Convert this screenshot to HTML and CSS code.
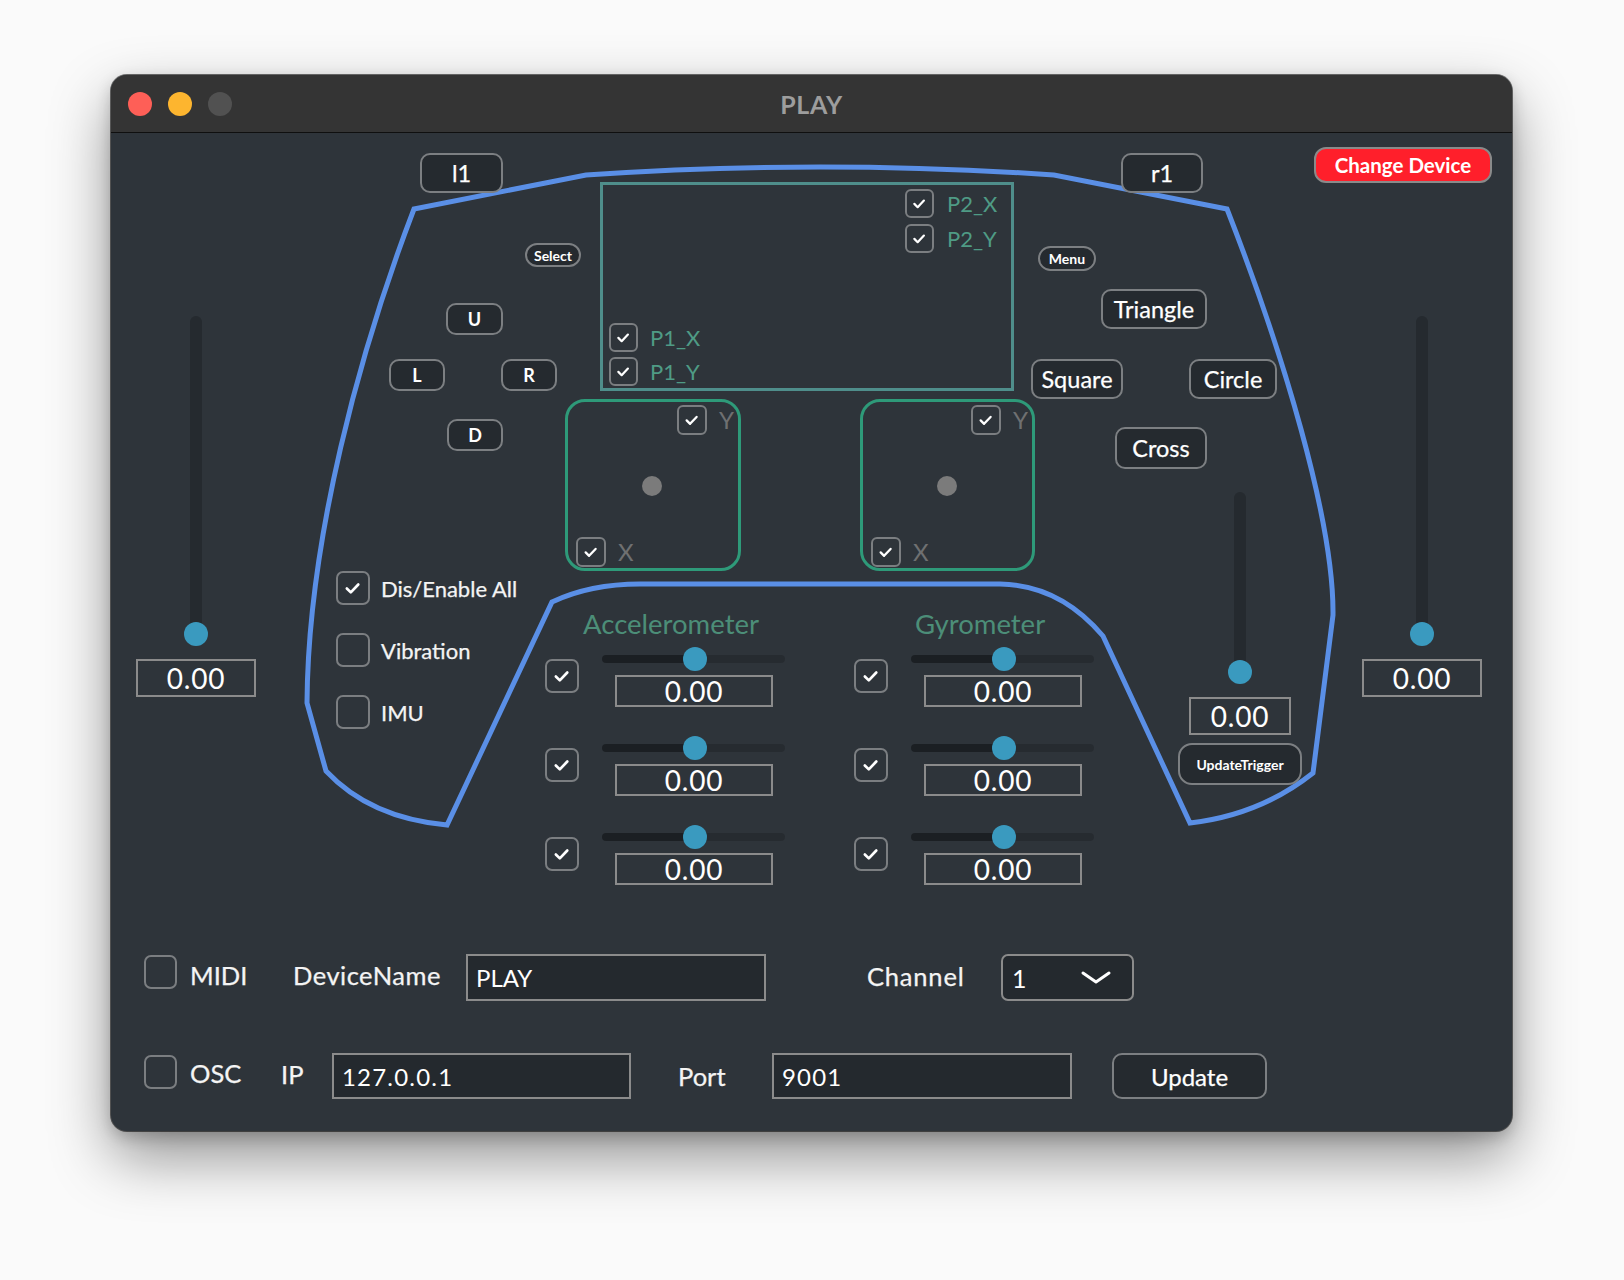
FILE: index.html
```html
<!DOCTYPE html>
<html>
<head>
<meta charset="utf-8">
<title>PLAY</title>
<link rel="stylesheet" href="styles.css">
</head>
<body>
<div class="window">
  <div class="titlebar">
    <div class="lights"><span class="light red"></span><span class="light yellow"></span><span class="light gray"></span></div>
    <div class="title">PLAY</div>
    <div class="tb-spacer"></div>
  </div>
  <div class="content">
    <div class="canvas">
      <svg class="outline" viewBox="111 133 1401 821" width="1401" height="821">
        <path d="M414 209 L586 175 Q820 159 1054 175 L1227 209 C1282 350 1334 520 1333 615 L1313 773 Q1260 815 1190 823 L1103 636 Q1060 585 1000 584 L640 584 Q590 584 552 602 L447 825 Q370 818 326 771 L307 703 C308 540 360 350 414 209 Z"/>
      </svg>

      <div class="btn b-l1">l1</div>
      <div class="btn b-r1">r1</div>
      <div class="btn b-change">Change Device</div>
      <div class="btn pill b-select">Select</div>
      <div class="btn pill b-menu">Menu</div>
      <div class="btn dpad b-u">U</div>
      <div class="btn dpad b-l">L</div>
      <div class="btn dpad b-r">R</div>
      <div class="btn dpad b-d">D</div>
      <div class="btn b-tri">Triangle</div>
      <div class="btn b-sq">Square</div>
      <div class="btn b-ci">Circle</div>
      <div class="btn b-cr">Cross</div>

      <div class="pad">
        <div class="pad-group pad-top">
          <div class="chk-row"><span class="cb cb-sm on"><svg viewBox="0 0 34 34"><path d="M10 17.5 L14.5 22 L23 13"/></svg></span><span class="lbl-teal">P2_X</span></div>
          <div class="chk-row"><span class="cb cb-sm on"><svg viewBox="0 0 34 34"><path d="M10 17.5 L14.5 22 L23 13"/></svg></span><span class="lbl-teal">P2_Y</span></div>
        </div>
        <div class="pad-group pad-bottom">
          <div class="chk-row p1"><span class="cb cb-sm on"><svg viewBox="0 0 34 34"><path d="M10 17.5 L14.5 22 L23 13"/></svg></span><span class="lbl-teal">P1_X</span></div>
          <div class="chk-row p1"><span class="cb cb-sm on"><svg viewBox="0 0 34 34"><path d="M10 17.5 L14.5 22 L23 13"/></svg></span><span class="lbl-teal">P1_Y</span></div>
        </div>
      </div>

      <div class="stick stick-left">
        <div class="stick-top"><span class="cb cb-st on"><svg viewBox="0 0 34 34"><path d="M10 17.5 L14.5 22 L23 13"/></svg></span><span class="lbl-axis">Y</span></div>
        <div class="dot"></div>
        <div class="stick-bottom"><span class="cb cb-st on"><svg viewBox="0 0 34 34"><path d="M10 17.5 L14.5 22 L23 13"/></svg></span><span class="lbl-axis">X</span></div>
      </div>
      <div class="stick stick-right">
        <div class="stick-top"><span class="cb cb-st on"><svg viewBox="0 0 34 34"><path d="M10 17.5 L14.5 22 L23 13"/></svg></span><span class="lbl-axis">Y</span></div>
        <div class="dot"></div>
        <div class="stick-bottom"><span class="cb cb-st on"><svg viewBox="0 0 34 34"><path d="M10 17.5 L14.5 22 L23 13"/></svg></span><span class="lbl-axis">X</span></div>
      </div>

      <div class="opts">
        <div class="opt-row"><span class="cb on"><svg viewBox="0 0 34 34"><path d="M10 17.5 L14.5 22 L23 13"/></svg></span><span class="opt-label">Dis/Enable All</span></div>
        <div class="opt-row"><span class="cb"></span><span class="opt-label">Vibration</span></div>
        <div class="opt-row"><span class="cb"></span><span class="opt-label">IMU</span></div>
      </div>

      <div class="sensor sensor-acc">
        <div class="sensor-head">Accelerometer</div>
        <div class="srows">
          <div class="srow"><span class="cb on"><svg viewBox="0 0 34 34"><path d="M10 17.5 L14.5 22 L23 13"/></svg></span><div class="sl-col"><div class="hslider"><div class="htrack"></div><div class="hknob"></div></div><div class="vbox">0.00</div></div></div>
          <div class="srow"><span class="cb on"><svg viewBox="0 0 34 34"><path d="M10 17.5 L14.5 22 L23 13"/></svg></span><div class="sl-col"><div class="hslider"><div class="htrack"></div><div class="hknob"></div></div><div class="vbox">0.00</div></div></div>
          <div class="srow"><span class="cb on"><svg viewBox="0 0 34 34"><path d="M10 17.5 L14.5 22 L23 13"/></svg></span><div class="sl-col"><div class="hslider"><div class="htrack"></div><div class="hknob"></div></div><div class="vbox">0.00</div></div></div>
        </div>
      </div>
      <div class="sensor sensor-gyro">
        <div class="sensor-head">Gyrometer</div>
        <div class="srows">
          <div class="srow"><span class="cb on"><svg viewBox="0 0 34 34"><path d="M10 17.5 L14.5 22 L23 13"/></svg></span><div class="sl-col"><div class="hslider"><div class="htrack"></div><div class="hknob"></div></div><div class="vbox">0.00</div></div></div>
          <div class="srow"><span class="cb on"><svg viewBox="0 0 34 34"><path d="M10 17.5 L14.5 22 L23 13"/></svg></span><div class="sl-col"><div class="hslider"><div class="htrack"></div><div class="hknob"></div></div><div class="vbox">0.00</div></div></div>
          <div class="srow"><span class="cb on"><svg viewBox="0 0 34 34"><path d="M10 17.5 L14.5 22 L23 13"/></svg></span><div class="sl-col"><div class="hslider"><div class="htrack"></div><div class="hknob"></div></div><div class="vbox">0.00</div></div></div>
        </div>
      </div>

      <div class="vslider vs-left"><div class="vtrack"></div><div class="vknob"></div><div class="vval">0.00</div></div>
      <div class="vslider vs-right"><div class="vtrack"></div><div class="vknob"></div><div class="vval">0.00</div></div>
      <div class="vslider vs-mid"><div class="vtrack"></div><div class="vknob"></div><div class="vval">0.00</div><div class="btn-trig">UpdateTrigger</div></div>
    </div>

    <div class="io">
      <div class="io-row row-midi">
        <span class="cb io-cb"></span>
        <span class="lab w-midi">MIDI</span>
        <span class="lab w-devname">DeviceName</span>
        <div class="field f-dev">PLAY</div>
        <span class="lab w-channel">Channel</span>
        <div class="dropdown"><span>1</span><svg class="chev" viewBox="0 0 30 13"><path d="M2 2 L15 11 L28 2"/></svg></div>
      </div>
      <div class="io-row row-osc">
        <span class="cb io-cb"></span>
        <span class="lab w-osc">OSC</span>
        <span class="lab w-ip">IP</span>
        <div class="field f-ip num">127.0.0.1</div>
        <span class="lab w-port">Port</span>
        <div class="field f-port num">9001</div>
        <div class="btn-update">Update</div>
      </div>
    </div>
  </div>
</div>
</body>
</html>
```

FILE: styles.css
```css
* { box-sizing: border-box; }
html, body { margin: 0; padding: 0; }
body {
  width: 1624px;
  height: 1280px;
  background: #fafafa;
  font-family: Lato, "Liberation Sans", sans-serif;
  color: #ffffff;
  overflow: hidden;
}

.window {
  margin: 75px 0 0 111px;
  width: 1401px;
  height: 1056px;
  border-radius: 16px;
  background: #2e343a;
  overflow: hidden;
  box-shadow: 0 0 0 1px rgba(0,0,0,0.55), 0 26px 60px rgba(0,0,0,0.42), 0 6px 16px rgba(0,0,0,0.2);
}

/* title bar */
.titlebar {
  height: 58px;
  background: #343434;
  border-bottom: 1px solid #0f0f0f;
  display: grid;
  grid-template-columns: 1fr auto 1fr;
  align-items: center;
}
.lights { display: flex; gap: 16px; padding-left: 17px; }
.light { width: 24px; height: 24px; border-radius: 50%; display: block; }
.light.red { background: #fe5f57; }
.light.yellow { background: #fdb52f; }
.light.gray { background: #515151; }
.title { color: #9d9d9d; font-weight: 700; font-size: 25px; letter-spacing: 0.6px; }

.content { height: 998px; }
.canvas { position: relative; height: 821px; }

.outline { position: absolute; left: 0; top: 0; }
.outline path { fill: none; stroke: #5a8fe6; stroke-width: 5; stroke-linejoin: miter; }

/* buttons */
.btn {
  position: absolute;
  display: flex;
  align-items: center;
  justify-content: center;
  background: #252a2f;
  border: 2px solid #7c7f82;
  border-radius: 10px;
  font-size: 23.5px;
  color: #ffffff;
  -webkit-text-stroke: 0.25px #ffffff;
}
.btn.pill { border-radius: 13px; font-size: 14px; font-weight: 700; -webkit-text-stroke: 0; }
.btn.dpad { font-size: 18px; font-weight: 700; -webkit-text-stroke: 0; }
.b-l1 { left: 309px; top: 20px; width: 83px; height: 40px; }
.b-r1 { left: 1010px; top: 20px; width: 82px; height: 40px; }
.b-change {
  left: 1203px; top: 14px; width: 178px; height: 36px;
  background: #ff1f2b; border-color: #8a8a8a; border-radius: 12px;
  font-size: 20.5px; font-weight: 700; -webkit-text-stroke: 0;
}
.b-select { left: 414px; top: 110px; width: 56px; height: 24px; }
.b-menu { left: 927px; top: 113px; width: 58px; height: 25px; }
.b-u { left: 335px; top: 170px; width: 57px; height: 32px; }
.b-l { left: 278px; top: 226px; width: 56px; height: 32px; }
.b-r { left: 390px; top: 226px; width: 56px; height: 32px; }
.b-d { left: 336px; top: 286px; width: 56px; height: 32px; }
.b-tri { left: 990px; top: 156px; width: 106px; height: 40px; }
.b-sq { left: 920px; top: 226px; width: 92px; height: 40px; }
.b-ci { left: 1078px; top: 226px; width: 88px; height: 40px; }
.b-cr { left: 1004px; top: 294px; width: 92px; height: 42px; }

/* checkboxes */
.cb {
  display: block;
  flex: none;
  width: 34px;
  height: 34px;
  border: 2px solid #7b7e81;
  border-radius: 7px;
}
.cb svg { display: block; width: 100%; height: 100%; }
.cb svg path { fill: none; stroke: #ffffff; stroke-width: 3; stroke-linecap: round; stroke-linejoin: round; }
.cb-sm { width: 29px; height: 29px; border-radius: 6px; }
.cb-st { width: 30px; height: 30px; border-radius: 6px; }

/* touch pad */
.pad {
  position: absolute;
  left: 489px; top: 49px;
  width: 414px; height: 209px;
  border: 3px solid #4f8e8b;
  display: flex;
  flex-direction: column;
  justify-content: space-between;
  padding: 4px 0 2px 6px;
}
.pad-group { display: flex; flex-direction: column; }
.pad-top { gap: 6px; margin-left: 296px; }
.pad-bottom { gap: 5px; }
.chk-row { display: flex; align-items: center; gap: 13px; }
.chk-row.p1 { gap: 12px; }
.lbl-teal { color: #4f9b85; font-size: 22px; line-height: 1; }

/* sticks */
.stick {
  position: absolute;
  top: 266px;
  width: 176px; height: 172px;
  border: 3px solid #2e9a79;
  border-radius: 20px;
  display: flex;
  flex-direction: column;
  justify-content: space-between;
  padding: 3px 4px 1px 8px;
}
.stick-left { left: 454px; }
.stick-right { left: 749px; width: 175px; }
.stick-top { display: flex; justify-content: flex-end; align-items: center; gap: 12px; }
.stick-bottom { display: flex; align-items: center; gap: 12px; }
.lbl-axis { color: #6f7071; font-size: 24px; line-height: 1; }
.dot { width: 20px; height: 20px; border-radius: 50%; background: #7b7b7b; align-self: center; margin-right: 6px; }
.stick-right .dot { margin-right: 5px; }

/* options */
.opts {
  position: absolute;
  left: 225px; top: 438px;
  display: flex;
  flex-direction: column;
  gap: 28px;
}
.opt-row { display: flex; align-items: center; gap: 11px; }
.opt-label { font-size: 22px; color: #f4f4f4; -webkit-text-stroke: 0.25px #f4f4f4; }

/* sensors */
.sensor { position: absolute; top: 475px; }
.sensor-acc { left: 434px; }
.sensor-gyro { left: 743px; }
.sensor-head {
  height: 32px;
  line-height: 32px;
  font-size: 27.5px;
  color: #4c8e78;
  margin: 0 0 7px 38px;
  white-space: nowrap;
}
.sensor-gyro .sensor-head { margin-left: 61px; }
.srows { display: flex; flex-direction: column; gap: 29px; }
.srow { display: flex; gap: 23px; }
.srow .cb { margin-top: 12px; }
.sl-col { display: flex; flex-direction: column; width: 183px; }
.hslider { position: relative; height: 24px; display: flex; align-items: center; }
.htrack {
  width: 100%;
  height: 8px;
  border-radius: 4px;
  background: linear-gradient(to right, #1b1f23 50%, #262b30 50%);
}
.hknob {
  position: absolute;
  left: calc(50% - 11px);
  top: 0;
  width: 24px; height: 24px;
  border-radius: 50%;
  background: #3a9abf;
}
.vbox {
  margin: 4px 0 0 13px;
  width: 158px;
  height: 32px;
  border: 2px solid #8b8b8b;
  display: flex;
  align-items: center;
  justify-content: center;
  font-size: 28px;
  letter-spacing: 0.8px;
}

/* vertical sliders */
.vslider { position: absolute; display: flex; flex-direction: column; align-items: center; }
.vs-left { left: 25px; top: 183px; width: 120px; }
.vs-right { left: 1251px; top: 183px; width: 120px; }
.vs-mid { left: 1067px; top: 359px; width: 124px; }
.vtrack { width: 12px; height: 318px; border-radius: 6px; background: #252a2f; }
.vs-mid .vtrack { height: 180px; }
.vknob { width: 24px; height: 24px; border-radius: 50%; background: #3a9abf; margin-top: -12px; }
.vval {
  margin-top: 13px;
  width: 120px; height: 38px;
  border: 2px solid #8b8b8b;
  display: flex; align-items: center; justify-content: center;
  font-size: 28px;
  letter-spacing: 0.8px;
}
.vs-mid .vval { width: 102px; }
.btn-trig {
  margin-top: 8px;
  width: 124px; height: 42px;
  background: #252a2f;
  border: 2px solid #7c7f82;
  border-radius: 14px;
  display: flex; align-items: center; justify-content: center;
  font-size: 14px; font-weight: 700;
}

/* io rows */
.io { padding-left: 33px; display: flex; flex-direction: column; gap: 52px; }
.io-row { display: flex; align-items: center; }
.row-midi { height: 47px; }
.row-osc { height: 46px; }
.io-cb { width: 33px; height: 34px; }
.row-midi .io-cb { margin-bottom: 11px; }
.row-osc .io-cb { margin-bottom: 8px; }
.lab { font-size: 25.5px; color: #f4f4f4; flex: none; margin-bottom: 6px; white-space: nowrap; -webkit-text-stroke: 0.25px #f4f4f4; }
.w-midi { width: 103px; margin-left: 13px; }
.w-devname { width: 173px; letter-spacing: 0.5px; }
.w-channel { width: 235px; padding-left: 101px; margin-bottom: 3px; letter-spacing: 0.8px; }
.w-osc { width: 91px; margin-left: 13px; margin-bottom: 7px; }
.w-ip { width: 51px; margin-bottom: 4px; }
.w-port { width: 141px; padding-left: 47px; margin-bottom: 0; }
.field {
  flex: none;
  height: 100%;
  background: #24292e;
  border: 2px solid #8b8b8b;
  font-size: 24px;
  padding-left: 8px;
  display: flex;
  align-items: center;
}
.field.num { letter-spacing: 1.2px; }
.f-dev { width: 300px; }
.f-ip { width: 299px; }
.f-port { width: 300px; }
.dropdown {
  flex: none;
  width: 133px; height: 100%;
  background: #24292e;
  border: 2px solid #8b8b8b;
  border-radius: 7px;
  display: flex;
  align-items: center;
  justify-content: space-between;
  padding: 0 21px 0 9px;
  font-size: 25px;
}
.chev { width: 30px; height: 13px; }
.chev path { fill: none; stroke: #ffffff; stroke-width: 3; stroke-linecap: round; stroke-linejoin: round; }
.btn-update {
  flex: none;
  margin-left: 40px;
  width: 155px; height: 100%;
  background: #252a2f;
  border: 2px solid #7c7f82;
  border-radius: 10px;
  display: flex; align-items: center; justify-content: center;
  font-size: 24px;
  -webkit-text-stroke: 0.25px #ffffff;
}
```
